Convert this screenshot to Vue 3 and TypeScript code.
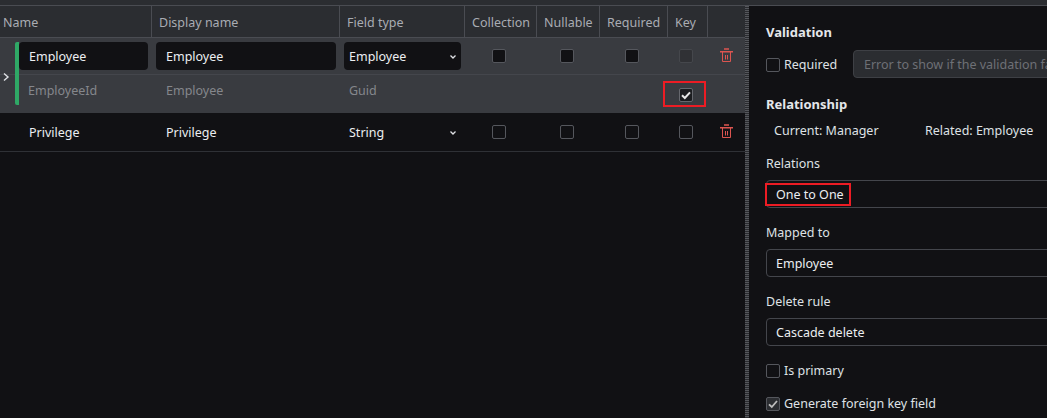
<script setup lang="ts">
interface Column {
  key: string
  label: string
}

const columns: Column[] = [
  { key: 'name', label: 'Name' },
  { key: 'display', label: 'Display name' },
  { key: 'type', label: 'Field type' },
  { key: 'collection', label: 'Collection' },
  { key: 'nullable', label: 'Nullable' },
  { key: 'required', label: 'Required' },
  { key: 'key', label: 'Key' },
  { key: 'actions', label: '' },
]

const flags = ['collection', 'nullable', 'required']
const trashLid = 'M4 1h5M0 3.7h13'
const trashBody = 'M2.5 4v9.5h8V4M5.5 7v4.5M7.5 7v4.5'
</script>

<template>
  <div class="page">
    <div class="topbar"></div>
    <div class="main">
      <section class="fields">
        <div class="grid head">
          <div v-for="col in columns" :key="col.key" class="th">{{ col.label }}</div>
        </div>

        <div class="selected">
          <svg class="chevron" width="8" height="10" viewBox="0 0 8 10">
            <path d="M2 1.5 6 5 2 8.5" fill="none" stroke="#dfe1e5" stroke-width="1.4" />
          </svg>
          <div class="accent"></div>
          <div class="grid sub first">
            <div class="cell"><div class="input">Employee</div></div>
            <div class="cell"><div class="input">Employee</div></div>
            <div class="cell">
              <div class="input type-input">
                Employee
                <svg class="caret" width="8" height="6" viewBox="0 0 8 6">
                  <path d="M1.5 1.5 4 4l2.5-2.5" fill="none" stroke="#dfe1e5" stroke-width="1.3" />
                </svg>
              </div>
            </div>
            <div v-for="flag in flags" :key="flag" class="cell center"><span class="box filled"></span></div>
            <div class="cell center"><span class="box disabled"></span></div>
            <div class="cell trash-cell">
              <svg class="trash" width="13" height="14" viewBox="0 0 13 14">
                <path :d="trashLid" fill="none" stroke="#dc5550" stroke-width="1.5" />
                <path :d="trashBody" fill="none" stroke="#dc5550" stroke-width="1" />
              </svg>
            </div>
          </div>
          <div class="grid sub second">
            <div class="cell muted id-text">EmployeeId</div>
            <div class="cell muted plain">Employee</div>
            <div class="cell muted guid">Guid</div>
            <div class="cell"></div>
            <div class="cell"></div>
            <div class="cell"></div>
            <div class="cell center key-cell">
              <span class="box checked">
                <svg width="12" height="12" viewBox="0 0 12 12">
                  <path d="M2 6.3 4.8 9 10 3.3" fill="none" stroke="#e6e6e6" stroke-width="2" />
                </svg>
              </span>
              <span class="mark key-mark"></span>
            </div>
            <div class="cell"></div>
          </div>
        </div>

        <div class="grid row">
          <div class="cell plain name-text">Privilege</div>
          <div class="cell plain text-cell">Privilege</div>
          <div class="cell plain type-plain">
            String
            <svg class="caret" width="8" height="6" viewBox="0 0 8 6">
              <path d="M1.5 1.5 4 4l2.5-2.5" fill="none" stroke="#dfe1e5" stroke-width="1.3" />
            </svg>
          </div>
          <div v-for="flag in flags" :key="flag" class="cell center"><span class="box"></span></div>
          <div class="cell center"><span class="box"></span></div>
          <div class="cell trash-cell">
            <svg class="trash" width="13" height="14" viewBox="0 0 13 14">
              <path :d="trashLid" fill="none" stroke="#dc5550" stroke-width="1.5" />
              <path :d="trashBody" fill="none" stroke="#dc5550" stroke-width="1" />
            </svg>
          </div>
        </div>
      </section>

      <div class="splitter"></div>

      <aside class="panel">
        <h3 class="title">Validation</h3>
        <div class="validation">
          <label class="check required"><span class="box small-gap"></span>Required</label>
          <div class="message">Error to show if the validation fails</div>
        </div>

        <h3 class="title relationship">Relationship</h3>
        <div class="sides">
          <span class="current">Current: Manager</span>
          <span>Related: Employee</span>
        </div>

        <div class="label relations">Relations</div>
        <div class="select">
          One to One
          <span class="mark one-mark"></span>
        </div>

        <div class="label">Mapped to</div>
        <div class="select">Employee</div>

        <div class="label">Delete rule</div>
        <div class="select">Cascade delete</div>

        <label class="check primary"><span class="box small-gap"></span>Is primary</label>
        <label class="check foreign">
          <span class="box small-gap ticked">
            <svg width="12" height="12" viewBox="0 0 12 12">
              <path d="M2 6.3 4.8 9 10 3" fill="none" stroke="#bdbdbd" stroke-width="1.8" />
            </svg>
          </span>
          Generate foreign key field
        </label>
      </aside>
    </div>
  </div>
</template>

<style>
html,
body {
  margin: 0;
  background: #111114;
}
</style>

<style scoped>
.page {
  width: 1047px;
  height: 418px;
  overflow: hidden;
  display: flex;
  flex-direction: column;
  background: #111114;
  color: #dfe1e5;
  font-family: 'Noto Sans', 'Liberation Sans', sans-serif;
  font-size: 12.5px;
  line-height: 18px;
}

.topbar {
  height: 5px;
  flex: none;
  background: #2b2d31;
  border-bottom: 1px solid #4a4c52;
}

.main {
  flex: 1;
  display: flex;
  min-height: 0;
}

.fields {
  width: 745px;
  flex: none;
}

.grid {
  display: grid;
  grid-template-columns: 152px 188px 125px 72px 63px 68px 40px 37px;
}

.head {
  height: 32px;
  background: #2b2d31;
  border-bottom: 1px solid #4a4c52;
  box-sizing: border-box;
}

.th {
  display: flex;
  align-items: center;
  padding: 2px 0 0 7px;
  border-right: 1px solid #4a4c52;
  color: #a9acb3;
  white-space: nowrap;
}

.th:first-child {
  padding-left: 3px;
}

.th:last-child {
  border-right: 0;
}

.selected {
  position: relative;
  height: 75px;
  background: #393b40;
}

.chevron {
  position: absolute;
  left: 2px;
  top: 34px;
}

.accent {
  position: absolute;
  left: 15px;
  top: 4px;
  width: 4px;
  height: 63px;
  background: #2fa866;
  border-radius: 2px 0 0 2px;
}

.sub.first {
  height: 37px;
  border-bottom: 1px solid #44464c;
  box-sizing: border-box;
}

.sub.second {
  height: 38px;
}

.cell {
  display: flex;
  align-items: center;
  padding: 0 4px;
  min-width: 0;
}

.first .cell:first-child {
  padding-left: 19px;
}

.center {
  justify-content: center;
  padding: 0 8px 0 4px;
}

.trash-cell {
  justify-content: center;
  padding-bottom: 2px;
}

.input {
  flex: 1;
  height: 28px;
  box-sizing: border-box;
  display: flex;
  align-items: center;
  justify-content: space-between;
  padding: 2px 10px 0;
  background: #111114;
  border-radius: 4px;
  color: #eceef1;
}

.type-input {
  padding: 2px 4px 0 5px;
}

.muted {
  color: #85878c;
  padding-bottom: 6px;
}

.plain {
  padding-left: 14px;
}

.id-text {
  padding-left: 28px;
}

.guid {
  padding-left: 9px;
}

.row {
  height: 39px;
  border-bottom: 1px solid #2f3136;
  box-sizing: border-box;
  color: #eceef1;
}

.name-text {
  padding-left: 29px;
  padding-top: 2px;
}

.text-cell {
  padding-top: 2px;
}

.type-plain {
  justify-content: space-between;
  padding: 2px 8px 0 9px;
}

.box {
  width: 14px;
  height: 14px;
  box-sizing: border-box;
  flex: none;
  display: inline-flex;
  align-items: center;
  justify-content: center;
  border: 1px solid #55575d;
  border-radius: 2px;
}

.filled {
  background: #111114;
}

.disabled {
  background: #303135;
  border-color: #45474c;
}

.checked {
  background: #1c1d20;
  border-color: #66686e;
}

.key-cell {
  position: relative;
  padding-top: 1px;
}

.mark {
  position: absolute;
  border: 2px solid #ed1c24;
  box-sizing: border-box;
  pointer-events: none;
}

.key-mark {
  left: -5px;
  top: 6px;
  width: 43px;
  height: 26px;
}

.splitter {
  width: 4px;
  flex: none;
  background: repeating-linear-gradient(to bottom, #55575c 0 1px, #2a2b2f 1px 2px);
}

.panel {
  flex: 1;
  min-width: 0;
  padding: 17px 0 0 17px;
}

.title {
  margin: 0;
  font-size: 13px;
  line-height: 18px;
  font-weight: 700;
  color: #e4e6ea;
}

.validation {
  display: flex;
  align-items: center;
  margin-top: 9px;
  width: 320px;
}

.check {
  display: flex;
  align-items: center;
  color: #dfe1e5;
  white-space: nowrap;
}

.required {
  width: 79px;
  flex: none;
  padding-top: 2px;
}

.small-gap {
  margin-right: 4px;
}

.message {
  flex: 1;
  height: 28px;
  margin-left: 8px;
  display: flex;
  align-items: center;
  padding: 1px 0 0 10px;
  box-sizing: border-box;
  background: #2b2d31;
  border: 1px solid #3e4045;
  border-radius: 4px;
  color: #6e7076;
  white-space: nowrap;
}

.relationship {
  margin-top: 17px;
}

.sides {
  display: flex;
  margin-top: 9px;
  padding-left: 8px;
  white-space: nowrap;
}

.current {
  width: 151px;
}

.label {
  margin-top: 16px;
  color: #dfe1e5;
}

.label.relations {
  margin-top: 15px;
}

.select {
  position: relative;
  width: 320px;
  height: 28px;
  margin-top: 7px;
  display: flex;
  align-items: center;
  padding: 2px 0 0 9px;
  box-sizing: border-box;
  border: 1px solid #44464c;
  border-radius: 4px;
  color: #eceef1;
}

.one-mark {
  left: -2px;
  top: 2px;
  width: 86px;
  height: 23px;
}

.primary {
  margin-top: 16px;
}

.foreign {
  margin-top: 15px;
}

.ticked {
  background: #2b2d31;
}
</style>
